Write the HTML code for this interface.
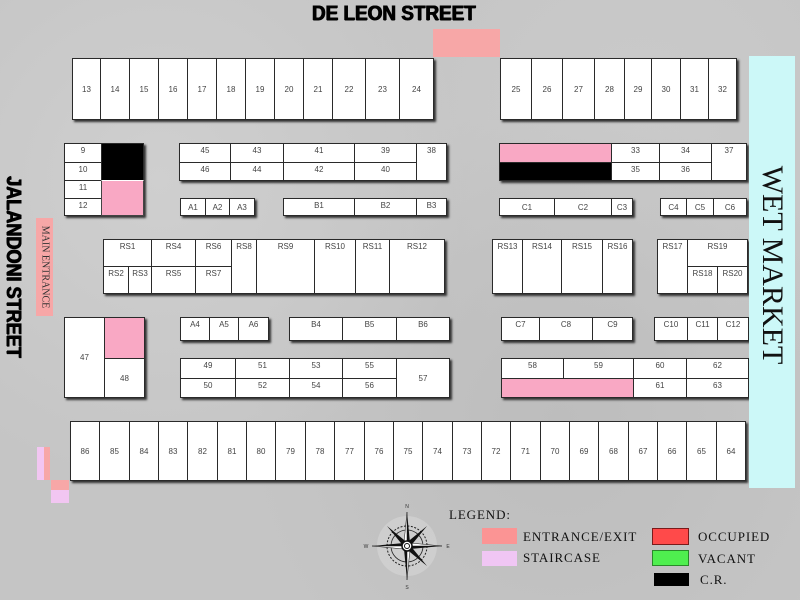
<!DOCTYPE html>
<html><head><meta charset="utf-8">
<style>
html,body{margin:0;padding:0}
body{width:800px;height:600px;position:relative;overflow:hidden;background:#c5c5c5;font-family:"Liberation Sans",sans-serif}
.bg{position:absolute;inset:0;background:radial-gradient(circle at 20% 30%,#cfcfcf 0,transparent 40%),radial-gradient(circle at 70% 70%,#bdbdbd 0,transparent 45%),radial-gradient(circle at 80% 20%,#cacaca 0,transparent 35%)}
.c{position:absolute;background:#fff;border:1px solid #2a2a2a;box-sizing:border-box;font-size:8px;color:#444;text-align:center;padding-top:2px;line-height:9px}
.m{display:flex;align-items:center;justify-content:center;padding-top:0}
.sh{position:absolute;box-shadow:2px 2px 2px #333;background:#fff}
.pk{background:#f9a8c4}
.bk{background:#000}
.t{position:absolute;font-family:"Liberation Serif",serif;color:#111}
.lg{letter-spacing:0.9px}
.st{font-weight:bold;color:#000;white-space:nowrap;font-family:'Liberation Sans Narrow','Liberation Sans',sans-serif;text-shadow:0.6px 0 0 #000,-0.6px 0 0 #000,0 0.4px 0 #000}
</style></head><body>
<div class="bg"></div>

<div class="st" style="position:absolute;left:312px;top:2px;font-size:21px;transform:scaleX(0.9);transform-origin:left top">DE LEON STREET</div>
<div style="position:absolute;left:433px;top:29px;width:67px;height:28px;background:#f7a7a7"></div>

<div class="sh" style="left:72px;top:58px;width:362px;height:62px"></div>
<div class="c m" style="left:72px;top:58px;width:29px;height:62px">13</div>
<div class="c m" style="left:100px;top:58px;width:30px;height:62px">14</div>
<div class="c m" style="left:129px;top:58px;width:30px;height:62px">15</div>
<div class="c m" style="left:158px;top:58px;width:30px;height:62px">16</div>
<div class="c m" style="left:187px;top:58px;width:30px;height:62px">17</div>
<div class="c m" style="left:216px;top:58px;width:30px;height:62px">18</div>
<div class="c m" style="left:245px;top:58px;width:30px;height:62px">19</div>
<div class="c m" style="left:274px;top:58px;width:30px;height:62px">20</div>
<div class="c m" style="left:303px;top:58px;width:30px;height:62px">21</div>
<div class="c m" style="left:332px;top:58px;width:34px;height:62px">22</div>
<div class="c m" style="left:365px;top:58px;width:35px;height:62px">23</div>
<div class="c m" style="left:399px;top:58px;width:35px;height:62px">24</div>

<div class="sh" style="left:500px;top:58px;width:237px;height:62px"></div>
<div class="c m" style="left:500px;top:58px;width:32px;height:62px">25</div>
<div class="c m" style="left:531px;top:58px;width:32px;height:62px">26</div>
<div class="c m" style="left:562px;top:58px;width:33px;height:62px">27</div>
<div class="c m" style="left:594px;top:58px;width:31px;height:62px">28</div>
<div class="c m" style="left:624px;top:58px;width:28px;height:62px">29</div>
<div class="c m" style="left:651px;top:58px;width:30px;height:62px">30</div>
<div class="c m" style="left:680px;top:58px;width:29px;height:62px">31</div>
<div class="c m" style="left:708px;top:58px;width:29px;height:62px">32</div>

<div class="sh" style="left:64px;top:143px;width:80px;height:73px"></div>
<div class="c" style="left:64px;top:143px;width:38px;height:20px">9</div>
<div class="c" style="left:64px;top:162px;width:38px;height:19px">10</div>
<div class="c" style="left:64px;top:180px;width:38px;height:19px">11</div>
<div class="c" style="left:64px;top:198px;width:38px;height:18px">12</div>
<div class="c bk" style="left:101px;top:143px;width:43px;height:38px"></div>
<div class="c pk" style="left:101px;top:180px;width:43px;height:36px;border-color:#fff #444 #444 #444"></div>

<div class="sh" style="left:179px;top:143px;width:268px;height:38px"></div>
<div class="c" style="left:179px;top:143px;width:52px;height:20px">45</div>
<div class="c" style="left:230px;top:143px;width:54px;height:20px">43</div>
<div class="c" style="left:283px;top:143px;width:72px;height:20px">41</div>
<div class="c" style="left:354px;top:143px;width:63px;height:20px">39</div>
<div class="c" style="left:179px;top:162px;width:52px;height:19px">46</div>
<div class="c" style="left:230px;top:162px;width:54px;height:19px">44</div>
<div class="c" style="left:283px;top:162px;width:72px;height:19px">42</div>
<div class="c" style="left:354px;top:162px;width:63px;height:19px">40</div>
<div class="c" style="left:416px;top:143px;width:31px;height:38px">38</div>

<div class="sh" style="left:180px;top:198px;width:75px;height:18px"></div>
<div class="c m" style="left:180px;top:198px;width:26px;height:18px">A1</div>
<div class="c m" style="left:205px;top:198px;width:25px;height:18px">A2</div>
<div class="c m" style="left:229px;top:198px;width:26px;height:18px">A3</div>
<div class="sh" style="left:283px;top:198px;width:164px;height:18px"></div>
<div class="c" style="left:283px;top:198px;width:72px;height:18px">B1</div>
<div class="c" style="left:354px;top:198px;width:63px;height:18px">B2</div>
<div class="c" style="left:416px;top:198px;width:31px;height:18px">B3</div>

<div class="sh" style="left:103px;top:239px;width:342px;height:55px"></div>
<div class="c" style="left:103px;top:239px;width:49px;height:28px">RS1</div>
<div class="c" style="left:151px;top:239px;width:45px;height:28px">RS4</div>
<div class="c" style="left:195px;top:239px;width:37px;height:28px">RS6</div>
<div class="c" style="left:103px;top:266px;width:26px;height:28px">RS2</div>
<div class="c" style="left:128px;top:266px;width:24px;height:28px">RS3</div>
<div class="c" style="left:151px;top:266px;width:45px;height:28px">RS5</div>
<div class="c" style="left:195px;top:266px;width:37px;height:28px">RS7</div>
<div class="c" style="left:231px;top:239px;width:26px;height:55px">RS8</div>
<div class="c" style="left:256px;top:239px;width:59px;height:55px">RS9</div>
<div class="c" style="left:314px;top:239px;width:42px;height:55px">RS10</div>
<div class="c" style="left:355px;top:239px;width:35px;height:55px">RS11</div>
<div class="c" style="left:389px;top:239px;width:56px;height:55px">RS12</div>

<div class="sh" style="left:499px;top:143px;width:248px;height:38px"></div>
<div class="c pk" style="left:499px;top:143px;width:113px;height:20px;border-bottom:none"></div>
<div class="c bk" style="left:499px;top:162px;width:113px;height:19px"></div>
<div class="c" style="left:611px;top:143px;width:49px;height:20px">33</div>
<div class="c" style="left:659px;top:143px;width:53px;height:20px">34</div>
<div class="c" style="left:611px;top:162px;width:49px;height:19px">35</div>
<div class="c" style="left:659px;top:162px;width:53px;height:19px">36</div>
<div class="c" style="left:711px;top:143px;width:36px;height:38px">37</div>

<div class="sh" style="left:499px;top:198px;width:134px;height:18px"></div>
<div class="c m" style="left:499px;top:198px;width:56px;height:18px">C1</div>
<div class="c m" style="left:554px;top:198px;width:58px;height:18px">C2</div>
<div class="c m" style="left:611px;top:198px;width:22px;height:18px">C3</div>
<div class="sh" style="left:660px;top:198px;width:87px;height:18px"></div>
<div class="c m" style="left:660px;top:198px;width:27px;height:18px">C4</div>
<div class="c m" style="left:686px;top:198px;width:28px;height:18px">C5</div>
<div class="c m" style="left:713px;top:198px;width:34px;height:18px">C6</div>

<div class="sh" style="left:492px;top:239px;width:141px;height:55px"></div>
<div class="c" style="left:492px;top:239px;width:31px;height:55px">RS13</div>
<div class="c" style="left:522px;top:239px;width:40px;height:55px">RS14</div>
<div class="c" style="left:561px;top:239px;width:42px;height:55px">RS15</div>
<div class="c" style="left:602px;top:239px;width:31px;height:55px">RS16</div>
<div class="sh" style="left:657px;top:239px;width:91px;height:55px"></div>
<div class="c" style="left:657px;top:239px;width:31px;height:55px">RS17</div>
<div class="c" style="left:687px;top:239px;width:61px;height:28px">RS19</div>
<div class="c" style="left:687px;top:266px;width:31px;height:28px">RS18</div>
<div class="c" style="left:717px;top:266px;width:31px;height:28px">RS20</div>

<div class="sh" style="left:64px;top:317px;width:81px;height:81px"></div>
<div class="c m" style="left:64px;top:317px;width:41px;height:81px">47</div>
<div class="c pk" style="left:104px;top:317px;width:41px;height:42px"></div>
<div class="c m" style="left:104px;top:358px;width:41px;height:40px">48</div>

<div class="sh" style="left:180px;top:317px;width:89px;height:24px"></div>
<div class="c" style="left:180px;top:317px;width:30px;height:24px">A4</div>
<div class="c" style="left:209px;top:317px;width:30px;height:24px">A5</div>
<div class="c" style="left:238px;top:317px;width:31px;height:24px">A6</div>
<div class="sh" style="left:289px;top:317px;width:161px;height:24px"></div>
<div class="c" style="left:289px;top:317px;width:54px;height:24px">B4</div>
<div class="c" style="left:342px;top:317px;width:55px;height:24px">B5</div>
<div class="c" style="left:396px;top:317px;width:54px;height:24px">B6</div>

<div class="sh" style="left:180px;top:358px;width:270px;height:40px"></div>
<div class="c" style="left:180px;top:358px;width:56px;height:21px">49</div>
<div class="c" style="left:235px;top:358px;width:55px;height:21px">51</div>
<div class="c" style="left:289px;top:358px;width:54px;height:21px">53</div>
<div class="c" style="left:342px;top:358px;width:55px;height:21px">55</div>
<div class="c" style="left:180px;top:378px;width:56px;height:20px">50</div>
<div class="c" style="left:235px;top:378px;width:55px;height:20px">52</div>
<div class="c" style="left:289px;top:378px;width:54px;height:20px">54</div>
<div class="c" style="left:342px;top:378px;width:55px;height:20px">56</div>
<div class="c m" style="left:396px;top:358px;width:54px;height:40px">57</div>

<div class="sh" style="left:501px;top:317px;width:132px;height:24px"></div>
<div class="c" style="left:501px;top:317px;width:39px;height:24px">C7</div>
<div class="c" style="left:539px;top:317px;width:54px;height:24px">C8</div>
<div class="c" style="left:592px;top:317px;width:41px;height:24px">C9</div>
<div class="sh" style="left:654px;top:317px;width:95px;height:24px"></div>
<div class="c" style="left:654px;top:317px;width:34px;height:24px">C10</div>
<div class="c" style="left:687px;top:317px;width:31px;height:24px">C11</div>
<div class="c" style="left:717px;top:317px;width:32px;height:24px">C12</div>

<div class="sh" style="left:501px;top:358px;width:248px;height:40px"></div>
<div class="c" style="left:501px;top:358px;width:63px;height:21px">58</div>
<div class="c" style="left:563px;top:358px;width:71px;height:21px">59</div>
<div class="c pk" style="left:501px;top:378px;width:133px;height:20px"></div>
<div class="c" style="left:633px;top:358px;width:54px;height:21px">60</div>
<div class="c" style="left:686px;top:358px;width:63px;height:21px">62</div>
<div class="c" style="left:633px;top:378px;width:54px;height:20px">61</div>
<div class="c" style="left:686px;top:378px;width:63px;height:20px">63</div>

<div class="sh" style="left:70px;top:421px;width:676px;height:60px"></div>
<div class="c m" style="left:70px;top:421px;width:30px;height:60px">86</div>
<div class="c m" style="left:99px;top:421px;width:31px;height:60px">85</div>
<div class="c m" style="left:129px;top:421px;width:30px;height:60px">84</div>
<div class="c m" style="left:158px;top:421px;width:30px;height:60px">83</div>
<div class="c m" style="left:187px;top:421px;width:31px;height:60px">82</div>
<div class="c m" style="left:217px;top:421px;width:30px;height:60px">81</div>
<div class="c m" style="left:246px;top:421px;width:30px;height:60px">80</div>
<div class="c m" style="left:275px;top:421px;width:31px;height:60px">79</div>
<div class="c m" style="left:305px;top:421px;width:30px;height:60px">78</div>
<div class="c m" style="left:334px;top:421px;width:31px;height:60px">77</div>
<div class="c m" style="left:364px;top:421px;width:30px;height:60px">76</div>
<div class="c m" style="left:393px;top:421px;width:30px;height:60px">75</div>
<div class="c m" style="left:422px;top:421px;width:31px;height:60px">74</div>
<div class="c m" style="left:452px;top:421px;width:30px;height:60px">73</div>
<div class="c m" style="left:481px;top:421px;width:30px;height:60px">72</div>
<div class="c m" style="left:510px;top:421px;width:31px;height:60px">71</div>
<div class="c m" style="left:540px;top:421px;width:30px;height:60px">70</div>
<div class="c m" style="left:569px;top:421px;width:30px;height:60px">69</div>
<div class="c m" style="left:598px;top:421px;width:31px;height:60px">68</div>
<div class="c m" style="left:628px;top:421px;width:30px;height:60px">67</div>
<div class="c m" style="left:657px;top:421px;width:30px;height:60px">66</div>
<div class="c m" style="left:686px;top:421px;width:31px;height:60px">65</div>
<div class="c m" style="left:716px;top:421px;width:30px;height:60px">64</div>

<div style="position:absolute;left:37px;top:447px;width:7px;height:33px;background:#f2c6f2"></div>
<div style="position:absolute;left:44px;top:447px;width:6px;height:33px;background:#f7a7a7"></div>
<div style="position:absolute;left:51px;top:480px;width:18px;height:10px;background:#f7a7a7"></div>
<div style="position:absolute;left:51px;top:490px;width:18px;height:13px;background:#f2c6f2"></div>

<div style="position:absolute;left:749px;top:56px;width:46px;height:432px;background:#ccf8f8"></div>
<div class="t" style="left:772px;top:265px;font-size:30px;white-space:nowrap;transform:translate(-50%,-50%) rotate(90deg);">WET MARKET</div>

<div class="st" style="position:absolute;left:13px;top:267px;font-size:21px;transform:translate(-50%,-50%) rotate(90deg) scaleX(0.86)">JALANDONI STREET</div>

<div style="position:absolute;left:36px;top:218px;width:17px;height:98px;background:#f7a7a7"></div>
<div class="t" style="left:45px;top:267px;font-size:10px;white-space:nowrap;color:#333;transform:translate(-50%,-50%) rotate(90deg)">MAIN ENTRANCE</div>

<svg style="position:absolute;left:362px;top:501px" width="90" height="90" viewBox="-45 -45 90 90">
<circle r="30" fill="#e4e4e4" opacity="0.35"/>
<circle r="20" fill="none" stroke="#222" stroke-width="1" stroke-dasharray="2 1.5"/>
<circle r="16" fill="none" stroke="#222" stroke-width="0.8"/>
<g fill="#111">
<polygon points="0,-34 3,-3 0,0"/><polygon points="0,-34 -3,-3 0,0" fill="#fff" stroke="#111" stroke-width="0.5"/>
<polygon points="0,34 -3,3 0,0"/><polygon points="0,34 3,3 0,0" fill="#fff" stroke="#111" stroke-width="0.5"/>
<polygon points="-35,0 -3,-3 0,0"/><polygon points="-35,0 -3,3 0,0" fill="#fff" stroke="#111" stroke-width="0.5"/>
<polygon points="35,0 3,3 0,0"/><polygon points="35,0 3,-3 0,0" fill="#fff" stroke="#111" stroke-width="0.5"/>
<polygon points="-20,-20 2,-2 -2,2"/><polygon points="20,-20 2,2 -2,-2"/>
<polygon points="20,20 -2,2 2,-2"/><polygon points="-20,20 2,-2 -2,2"/>
</g>
<circle r="5" fill="#fff" stroke="#111" stroke-width="1.5"/>
<circle r="2.5" fill="none" stroke="#111" stroke-width="1"/>
<text x="0" y="-38" font-size="5" text-anchor="middle" fill="#333">N</text>
<text x="0" y="43" font-size="5" text-anchor="middle" fill="#333">S</text>
<text x="-41" y="2" font-size="5" text-anchor="middle" fill="#333">W</text>
<text x="41" y="2" font-size="5" text-anchor="middle" fill="#333">E</text>
</svg>

<div class="t lg" style="left:449px;top:507px;font-size:13px">LEGEND:</div>
<div style="position:absolute;left:482px;top:528px;width:35px;height:16px;background:#fb9494"></div>
<div class="t lg" style="left:523px;top:529px;font-size:13px">ENTRANCE/EXIT</div>
<div style="position:absolute;left:482px;top:551px;width:35px;height:15px;background:#f0c6f4"></div>
<div class="t lg" style="left:523px;top:550px;font-size:13px">STAIRCASE</div>
<div style="position:absolute;left:652px;top:528px;width:37px;height:17px;background:#ff4a4a;border:1px solid #7a1a1a;box-sizing:border-box"></div>
<div class="t lg" style="left:698px;top:529px;font-size:13px">OCCUPIED</div>
<div style="position:absolute;left:652px;top:550px;width:37px;height:16px;background:#4fef4f;border:1px solid #2a8a2a;box-sizing:border-box"></div>
<div class="t lg" style="left:698px;top:551px;font-size:13px">VACANT</div>
<div style="position:absolute;left:654px;top:573px;width:35px;height:13px;background:#000"></div>
<div class="t lg" style="left:700px;top:572px;font-size:13px">C.R.</div>
</body></html>
